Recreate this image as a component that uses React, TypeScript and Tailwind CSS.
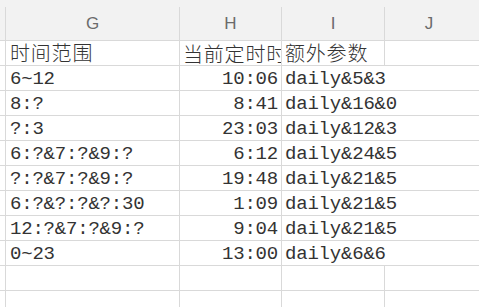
const rows = [
  { g: "6~12", h: "10:06", i: "daily&5&3" },
  { g: "8:?", h: "8:41", i: "daily&16&0" },
  { g: "?:3", h: "23:03", i: "daily&12&3" },
  { g: "6:?&7:?&9:?", h: "6:12", i: "daily&24&5" },
  { g: "?:?&7:?&9:?", h: "19:48", i: "daily&21&5" },
  { g: "6:?&?:?&?:30", h: "1:09", i: "daily&21&5" },
  { g: "12:?&7:?&9:?", h: "9:04", i: "daily&21&5" },
  { g: "0~23", h: "13:00", i: "daily&6&6" },
]

const mono = "font-['Liberation_Mono','Noto_Sans_CJK_SC',monospace] text-[19px] tracking-[-0.2px] text-[#333]"
const cjk = "font-['Noto_Sans_CJK_SC',sans-serif] font-light text-[20px] tracking-[0.8px] text-[#333]"

function Row({ children }: { children: React.ReactNode }) {
  return <div className="flex h-[25px] border-b border-[#d9d9d9]">{children}</div>
}

export default function App() {
  return (
    <div className="w-[479px] h-[307px] overflow-hidden bg-white">
      {/* column header band */}
      <div className="h-[7px] bg-[#f2f2f2]" />
      <div className="flex h-[34px] bg-[#f2f2f2] border-b border-[#d9d9d9] font-['Liberation_Sans',sans-serif] text-[17px] text-[#6b6b6b]">
        <div className="w-[6px] shrink-0 border-r border-[#d9d9d9]" />
        {[
          ["G", "w-[174px]"],
          ["H", "w-[102px]"],
          ["I", "w-[103px]"],
        ].map(([l, w]) => (
          <div key={l} className={`${w} shrink-0 border-r border-[#d9d9d9] flex items-center justify-center`}>
            {l}
          </div>
        ))}
        <div className="flex-1 flex items-center justify-center pr-[6px]">J</div>
      </div>

      {/* title row */}
      <Row>
        <div className="w-[6px] shrink-0 border-r border-[#d9d9d9]" />
        <div className={`w-[174px] shrink-0 border-r border-[#d9d9d9] pl-[4px] flex items-end leading-[24px] ${cjk}`}>时间范围</div>
        <div className={`w-[102px] shrink-0 border-r border-[#d9d9d9] pl-[3px] leading-[24px] pt-[1px] overflow-hidden whitespace-nowrap ${cjk}`}>当前定时时间</div>
        <div className={`w-[103px] shrink-0 border-r border-[#d9d9d9] pl-[3px] flex items-end leading-[24px] ${cjk}`}>额外参数</div>
        <div className="flex-1" />
      </Row>

      {rows.map((r) => (
        <Row key={r.g + r.h}>
          <div className="w-[6px] shrink-0 border-r border-[#d9d9d9]" />
          <div className={`w-[174px] shrink-0 border-r border-[#d9d9d9] pl-[4px] flex items-end leading-[22px] whitespace-nowrap ${mono}`}>{r.g}</div>
          <div className={`w-[102px] shrink-0 border-r border-[#d9d9d9] pr-[3px] flex items-end justify-end leading-[22px] ${mono}`}>{r.h}</div>
          <div className={`w-[103px] shrink-0 pl-[3px] flex items-end leading-[22px] whitespace-nowrap ${mono}`}>{r.i}</div>
          <div className="flex-1" />
        </Row>
      ))}

      {[0, 1].map((n) => (
        <Row key={n}>
          <div className="w-[6px] shrink-0 border-r border-[#d9d9d9]" />
          <div className="w-[174px] shrink-0 border-r border-[#d9d9d9]" />
          <div className="w-[102px] shrink-0 border-r border-[#d9d9d9]" />
          <div className="w-[103px] shrink-0 border-r border-[#d9d9d9]" />
          <div className="flex-1" />
        </Row>
      ))}
    </div>
  )
}
